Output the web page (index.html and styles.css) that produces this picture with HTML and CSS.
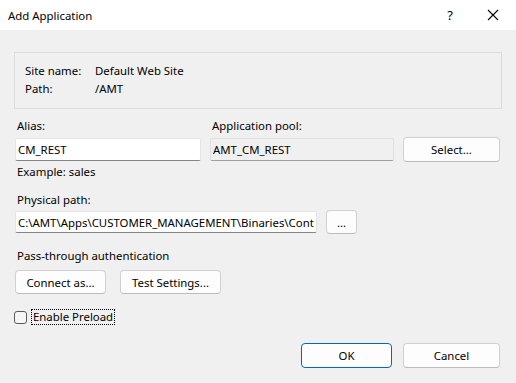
FILE: index.html
```html
<!DOCTYPE html>
<html lang="en">
<head>
    <meta charset="UTF-8">
    <meta name="viewport" content="width=device-width, initial-scale=1.0">
    <title>Add Application</title>
    <link rel="stylesheet" href="styles.css">
</head>
<body>
    <div class="titlebar">
        <div class="title">Add Application</div>
        <div class="title-btn help">?</div>
        <div class="title-btn close">
            <svg width="12" height="12" viewBox="0 0 12 12">
                <path d="M1 1 L11 11 M11 1 L1 11" stroke="#000" stroke-width="1.1" fill="none"/>
            </svg>
        </div>
    </div>

    <div class="dialog">
        <div class="site-box">
            <div class="site-row"><span class="site-label">Site name:</span><span>Default Web Site</span></div>
            <div class="site-row"><span class="site-label">Path:</span><span>/AMT</span></div>
        </div>

        <div class="form">
            <div class="pool-grid">
                <label class="lbl" for="alias">Alias:</label>
                <label class="lbl" for="pool">Application pool:</label>
                <span></span>
                <input type="text" id="alias" class="field" value="CM_REST">
                <input type="text" id="pool" class="field readonly" value="AMT_CM_REST" readonly>
                <button class="btn">Select...</button>
            </div>
            <div class="lbl hint">Example: sales</div>

            <label class="lbl path-label" for="path">Physical path:</label>
            <div class="path-row">
                <input type="text" id="path" class="field path-field" value="C:\AMT\Apps\CUSTOMER_MANAGEMENT\Binaries\Content">
                <button class="btn btn-browse">...</button>
            </div>

            <div class="lbl auth-label">Pass-through authentication</div>
            <div class="auth-row">
                <button class="btn btn-connect">Connect as...</button>
                <button class="btn btn-test">Test Settings...</button>
            </div>

            <div class="check-row">
                <span class="checkbox"></span>
                <span class="check-label">Enable Preload</span>
            </div>
        </div>

        <div class="footer">
            <button class="btn btn-ok">OK</button>
            <button class="btn btn-cancel">Cancel</button>
        </div>
    </div>
</body>
</html>
```

FILE: styles.css
```css
body {
    margin: 0;
    width: 516px;
    height: 383px;
    overflow: hidden;
    font-family: "Noto Sans", "Open Sans", sans-serif;
    font-size: 11.4px;
    color: #000;
    background: #f0f0f0;
}

.titlebar {
    display: flex;
    align-items: center;
    height: 30px;
    background: #fff;
    padding-left: 8px;
}

.title {
    flex: 1;
}

.title-btn {
    display: flex;
    align-items: center;
    justify-content: center;
    height: 30px;
}

.help {
    width: 20px;
    margin-right: 27px;
    font-size: 13px;
}

.close {
    width: 12px;
    margin-right: 17px;
}

.dialog {
    padding-top: 22px;
}

.site-box {
    box-sizing: border-box;
    height: 57px;
    margin: 0 14px;
    padding: 9px 10px;
    border: 1px solid #dcdcdc;
}

.site-row {
    display: flex;
    height: 18px;
    line-height: 18px;
}

.site-label {
    width: 70px;
}

.form {
    padding: 8px 0 0 15px;
}

.lbl {
    display: block;
    height: 18px;
    line-height: 18px;
    padding-left: 2px;
}

.pool-grid {
    display: grid;
    grid-template-columns: 186px 184px 97px;
    grid-template-rows: 18px 25px;
    column-gap: 9px;
    row-gap: 2px;
    align-items: center;
}

.field {
    box-sizing: border-box;
    height: 23px;
    margin: 0;
    padding: 0 2px;
    font-family: inherit;
    font-size: 11.4px;
    color: #000;
    background: #fff;
    border: 1px solid #e5e5e5;
    border-bottom-color: #868686;
    border-radius: 2px;
    outline: none;
}

.readonly {
    background: #f0f0f0;
    border-color: #e0e0e0;
    border-bottom-color: #a0a0a0;
}

.btn {
    box-sizing: border-box;
    height: 25px;
    margin: 0;
    padding: 0;
    font-family: inherit;
    font-size: 11.4px;
    color: #000;
    background: #fdfdfd;
    border: 1px solid #d0d0d0;
    border-bottom-color: #bcbcbc;
    border-radius: 4px;
}

.hint {
    margin-top: 1px;
}

.path-label {
    margin-top: 10px;
}

.path-row {
    display: flex;
    align-items: center;
    gap: 9px;
    height: 24px;
    margin-top: 1px;
}

.path-field {
    width: 302px;
    height: 22px;
}

.btn-browse {
    width: 31px;
    height: 24px;
}

.auth-label {
    margin-top: 13px;
}

.auth-row {
    display: flex;
    gap: 14px;
    margin-top: 5px;
}

.btn-connect {
    width: 91px;
    height: 24px;
}

.btn-test {
    width: 101px;
    height: 24px;
}

.check-row {
    display: flex;
    align-items: center;
    height: 16px;
    margin: 15px 0 0 -1px;
}

.checkbox {
    box-sizing: border-box;
    width: 13px;
    height: 13px;
    border: 1px solid #5a5a5a;
    border-radius: 3px;
    background: #f6f6f6;
}

.check-label {
    margin-left: 4px;
    padding: 0 1px;
    line-height: 14px;
    border: 1px dotted #000;
}

.footer {
    display: flex;
    justify-content: flex-end;
    gap: 11px;
    padding-right: 16px;
    margin-top: 18px;
}

.btn-ok {
    width: 91px;
    border-color: #0067c0;
}

.btn-cancel {
    width: 97px;
}
```
